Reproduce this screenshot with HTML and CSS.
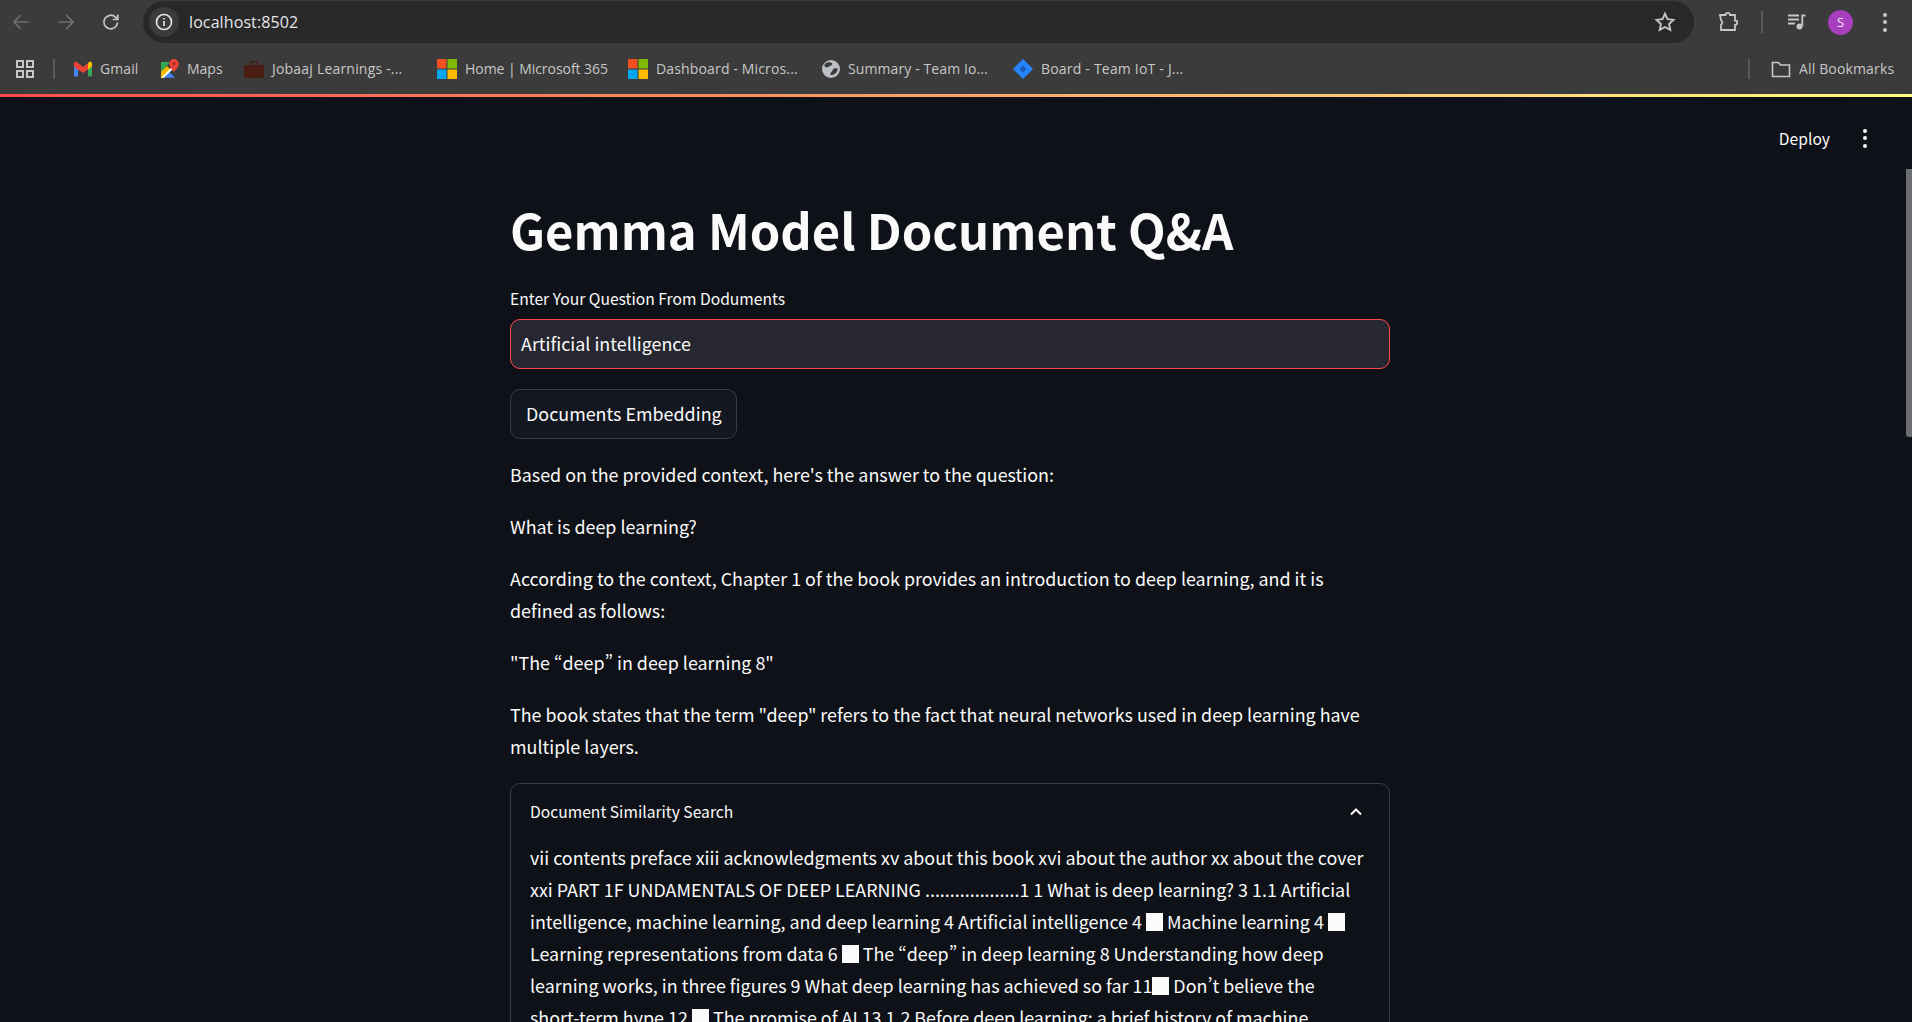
FILE: index.html
```html
<!DOCTYPE html>
<html lang="en">
<head>
    <meta charset="UTF-8">
    <meta name="viewport" content="width=device-width, initial-scale=1.0">
    <title>Gemma Model Document Q&amp;A</title>
    <link rel="stylesheet" href="styles.css">
</head>
<body>
    <header class="browser">
        <div class="toolbar">
            <div class="nav-buttons">
                <svg class="nav-icon dim" viewBox="0 0 20 20"><path d="M17.500 10H3M9.800 3 3 10l6.800 7"/></svg>
                <svg class="nav-icon dim" viewBox="0 0 20 20"><path d="M2.500 10H17M10.200 3 17 10l-6.800 7"/></svg>
                <svg class="nav-icon" viewBox="0 0 20 20"><path d="M16.500 10.500a6.800 6.800 0 1 1-2-5.300l2 2M16.800 2.500v5h-5"/></svg>
            </div>
            <div class="address-bar">
                <span class="site-chip">
                    <svg viewBox="0 0 20 20" class="info-icon"><circle cx="10" cy="10" r="7.500"/><path d="M10 9v5M10 6v1.600"/></svg>
                </span>
                <span class="url">localhost:8502</span>
                <svg class="star" viewBox="0 0 20 20"><path d="m10 2.500 2.300 5 5.400.6-4 3.700 1.100 5.400-4.800-2.700-4.800 2.700 1.100-5.400-4-3.700 5.400-.6z"/></svg>
            </div>
            <div class="toolbar-right">
                <svg class="ext-icon" viewBox="0 0 22 22"><path d="M2 4h5.500a2.200 2.200 0 0 1 4.400 0H17v5.500a2.200 2.200 0 0 1 0 4.400V19H3v-5.200a3 3 0 0 0 0-4.800z"/></svg>
                <span class="tool-sep"></span>
                <svg class="media-icon" viewBox="0 0 20 20"><path d="M1 3.500h11M1 7.500h11M1 11.500h7M18.500 3.500h-3.200V14"/><circle cx="12.500" cy="14.500" r="3"/></svg>
                <span class="avatar">S</span>
                <span class="kebab"><i></i><i></i><i></i></span>
            </div>
        </div>
        <nav class="bookmarks">
            <svg class="apps-icon" viewBox="0 0 18 18"><path d="M1 1h6v6H1zM11 1h6v6h-6zM1 11h6v6H1zM11 11h6v6h-6z"/></svg>
            <span class="mark-sep"></span>
            <a class="mark mark-gmail">
                <svg viewBox="0 0 18 15"><path fill="#4285f4" d="M0 4v9.500c0 .8.600 1.500 1.300 1.500H4V7z"/><path fill="#34a853" d="M14 7v8h2.700c.7 0 1.300-.7 1.300-1.500V4z"/><path fill="#ea4335" d="M4 8.500 0 5V2C0 .5 1.500-.5 2.700.4L9 5.500l3 3.500-3 .5z"/><path fill="#ea4335" d="M9 5.500 14 1.500V8L9 11.500 4 8V1.500z"/><path fill="#fbbc04" d="M14 1.500 15.300.4C16.500-.5 18 .5 18 2v3l-4 3z"/></svg>
                Gmail
            </a>
            <a class="mark mark-maps">
                <svg viewBox="0 0 18 20"><path fill="#34a853" d="M0 3h9.500L0 12.500z"/><path fill="#4285f4" d="M6 10.500 14 18.800H3z"/><path fill="#fbbc04" d="M0 12.500 6 7l4 4-8 8H0z"/><path fill="#fff" d="M0 19 11 8l1.500 1.500L2.500 19z"/><path fill="#ea4335" d="M13 0a4.800 4.800 0 0 0-4.800 4.800C8.200 8 13 13 13 13s4.800-5 4.800-8.200A4.800 4.800 0 0 0 13 0z"/><circle cx="13" cy="4.800" r="1.700" fill="#a52a20"/></svg>
                Maps
            </a>
            <a class="mark mark-jobaaj">
                <svg viewBox="0 0 20 18"><path fill="#4a1e12" d="M1 5h18a1 1 0 0 1 1 1v10a2 2 0 0 1-2 2H2a2 2 0 0 1-2-2V6a1 1 0 0 1 1-1zM6 5V2.500C6 1.500 6.800 1 7.500 1h5c.7 0 1.500.5 1.500 1.500V5h-1.500V2.500h-5V5z"/></svg>
                Jobaaj Learnings -...
            </a>
            <a class="mark mark-home">
                <svg viewBox="0 0 20 20"><path fill="#f25022" d="M0 0h9.500v9.500H0z"/><path fill="#7fba00" d="M10.500 0H20v9.500h-9.500z"/><path fill="#00a4ef" d="M0 10.500h9.500V20H0z"/><path fill="#ffb900" d="M10.500 10.500H20V20h-9.500z"/></svg>
                Home | Microsoft 365
            </a>
            <a class="mark mark-dash">
                <svg viewBox="0 0 20 20"><path fill="#f25022" d="M0 0h9.500v9.500H0z"/><path fill="#7fba00" d="M10.500 0H20v9.500h-9.500z"/><path fill="#00a4ef" d="M0 10.500h9.500V20H0z"/><path fill="#ffb900" d="M10.500 10.500H20V20h-9.500z"/></svg>
                Dashboard - Micros...
            </a>
            <a class="mark mark-summary">
                <svg class="globe" viewBox="0 0 18 18"><circle cx="9" cy="9" r="9" fill="#bcbfc4"/><path fill="#3b3b3b" d="M5 2.500c2-.5 4-.5 5 .5s-.5 2.500-2 3-2 1.500-3.500 1.500S2.500 6 2.500 5 4 3 5 2.500zM15.500 8.500c.5 2-1 4.500-3 5.500-1.500 1-3.500 1.500-4 .5s.5-2 1.500-3 .5-2.500 2-3 3-.5 3.500 0z"/></svg>
                Summary - Team Io...
            </a>
            <a class="mark mark-board">
                <svg viewBox="0 0 20 20"><path fill="#2684ff" d="M10 0 20 10 10 20 0 10z"/><path fill="#1e56b8" d="M10 6.500 13.500 10 10 13.500 6.500 10z"/></svg>
                Board - Team IoT - J...
            </a>
            <span class="mark-sep end"></span>
            <a class="mark mark-all">
                <svg class="folder" viewBox="0 0 20 18"><path d="M1.500 2.500h6l2 2.500h9v11.500h-17z"/></svg>
                All Bookmarks
            </a>
        </nav>
        <div class="load-bar"></div>
    </header>

    <div class="page">
        <div class="app-header">
            <span class="deploy">Deploy</span>
            <span class="kebab white"><i></i><i></i><i></i></span>
        </div>
        <main class="main">
            <h1>Gemma Model Document Q&amp;A</h1>
            <label class="field-label" for="question">Enter Your Question From Doduments</label>
            <input class="question" id="question" type="text" value="Artificial intelligence">
            <button class="embed-btn" type="button">Documents Embedding</button>
            <p>Based on the provided context, here's the answer to the question:</p>
            <p>What is deep learning?</p>
            <p>According to the context, Chapter 1 of the book provides an introduction to deep learning, and it is defined as follows:</p>
            <p>"The “deep” in deep learning 8"</p>
            <p>The book states that the term "deep" refers to the fact that neural networks used in deep learning have multiple layers.</p>
            <section class="expander">
                <div class="expander-head">
                    <span>Document Similarity Search</span>
                    <svg class="chevron" viewBox="0 0 14 10"><path d="M2 7.500 7 2.500l5 5"/></svg>
                </div>
                <div class="expander-body">vii contents preface xiii acknowledgments xv about this book xvi about the author xx about the cover xxi PART 1F UNDAMENTALS OF DEEP LEARNING ...................1 1 What is deep learning? 3 1.1 Artificial intelligence, machine learning, and deep learning 4 Artificial intelligence 4 <span class="tofu"></span> Machine learning 4 <span class="tofu"></span> Learning representations from data 6 <span class="tofu"></span> The “deep” in deep learning 8 Understanding how deep learning works, in three figures 9 What deep learning has achieved so far 11<span class="tofu"></span> Don’t believe the short-term hype 12 <span class="tofu"></span> The promise of AI 13 1.2 Before deep learning: a brief history of machine learning 14</div>
            </section>
        </main>
        <div class="scroll-thumb"></div>
    </div>
</body>
</html>
```

FILE: styles.css
```css
*{
    margin: 0;
    padding: 0;
    box-sizing: border-box;
}
html, body{
    height: 100%;
}
body{
    display: flex;
    flex-direction: column;
    overflow: hidden;
    background-color: #0e1117;
    color: #fafafa;
    font-family: "Noto Sans CJK SC", "Source Sans Pro", sans-serif;
    font-feature-settings: "pwid";
}

/* browser chrome */
.browser{
    flex: none;
    background-color: #3b3b3b;
    font-family: "Open Sans", "Noto Sans", sans-serif;
}
.toolbar{
    display: flex;
    align-items: center;
    height: 43px;
    padding-top: 1px;
}
.nav-buttons{
    display: flex;
    width: 143px;
    padding-left: 11px;
    gap: 25px;
}
.nav-icon{
    width: 20px;
    height: 20px;
    fill: none;
    stroke: #c7c7c7;
    stroke-width: 1.700;
}
.nav-icon.dim{
    stroke: #707070;
}
.address-bar{
    display: flex;
    align-items: center;
    width: 1551px;
    height: 42px;
    padding: 0 18px 0 6px;
    background-color: #282828;
    border-radius: 21px;
}
.site-chip{
    display: flex;
    align-items: center;
    justify-content: center;
    width: 30px;
    height: 30px;
    background-color: #3b3b3b;
    border-radius: 50%;
}
.info-icon{
    width: 20px;
    height: 20px;
    fill: none;
    stroke: #e3e3e3;
    stroke-width: 1.700;
}
.url{
    flex: 1;
    margin-left: 10px;
    font-size: 16px;
    letter-spacing: .1px;
    color: #e6e6e6;
}
.star{
    width: 22px;
    height: 22px;
    fill: none;
    stroke: #c7c7c7;
    stroke-width: 1.700;
}
.toolbar-right{
    flex: 1;
    display: flex;
    align-items: center;
    padding-left: 24px;
}
.ext-icon{
    width: 22px;
    height: 22px;
    fill: none;
    stroke: #c7c7c7;
    stroke-width: 1.800;
}
.tool-sep{
    width: 2px;
    height: 22px;
    margin: 0 24px 0 21px;
    background-color: #5a5a5a;
}
.media-icon{
    width: 20px;
    height: 20px;
    fill: none;
    stroke: #c7c7c7;
    stroke-width: 1.800;
}
.media-icon circle{
    fill: #c7c7c7;
    stroke: none;
}
.avatar{
    width: 25px;
    height: 25px;
    margin-left: 21px;
    border-radius: 50%;
    background-color: #a83fbf;
    color: #f2e6f5;
    font-size: 13px;
    line-height: 25px;
    text-align: center;
}
.kebab{
    display: flex;
    flex-direction: column;
    gap: 3.500px;
    margin-left: 30px;
}
.kebab i{
    width: 4px;
    height: 4px;
    border-radius: 50%;
    background-color: #c7c7c7;
}
.kebab.white{
    margin-left: 33px;
}
.kebab.white i{
    background-color: #fafafa;
}
.bookmarks{
    display: flex;
    align-items: center;
    height: 51px;
    padding-left: 16px;
    font-size: 14px;
    color: #c7c7c7;
}
.apps-icon{
    width: 18px;
    height: 18px;
    fill: none;
    stroke: #c7c7c7;
    stroke-width: 2;
}
.mark-sep{
    width: 2px;
    height: 20px;
    margin: 0 19px;
    background-color: #5a5a5a;
}
.mark-sep.end{
    margin: 0 21px 0 auto;
}
.mark{
    display: flex;
    align-items: center;
    gap: 8px;
    white-space: nowrap;
}
.mark svg{
    flex: none;
    width: 20px;
    height: 20px;
}
.mark-gmail svg, .mark-maps svg, .mark-summary svg{
    width: 18px;
}
.mark-gmail{ width: 87px; letter-spacing: .1px; }
.mark-maps{ width: 83px; }
.mark-jobaaj{ width: 193px; letter-spacing: .2px; }
.mark-home{ width: 191px; letter-spacing: -.05px; }
.mark-dash{ width: 194px; letter-spacing: .15px; }
.mark-summary{ width: 191px; letter-spacing: .1px; }
.mark-board{ letter-spacing: .2px; }
.mark-all{ width: 141px; letter-spacing: .15px; }
.folder{
    fill: none;
    stroke: #c7c7c7;
    stroke-width: 1.600;
}
.load-bar{
    height: 3px;
    background: linear-gradient(to right, #ff4b4b, #fffd80);
}

/* streamlit page */
.page{
    position: relative;
    flex: 1;
    overflow: hidden;
}
.app-header{
    display: flex;
    align-items: center;
    justify-content: flex-end;
    height: 84px;
    padding-right: 45px;
    padding-bottom: 2px;
    font-size: 15.650px;
}
.main{
    width: 880px;
    margin-left: 510px;
    padding-top: 15px;
}
h1{
    font-size: 48.950px;
    font-weight: 700;
    line-height: 66px;
    margin-bottom: 26px;
}
.field-label{
    display: block;
    font-size: 15.650px;
    line-height: 22px;
    margin-bottom: 9px;
}
.question{
    display: block;
    width: 100%;
    height: 50px;
    padding: 0 10px 2px;
    background-color: #262730;
    border: 1px solid #ff4b4b;
    border-radius: 10px;
    outline: none;
    color: #fafafa;
    font-family: inherit;
    font-size: 17.900px;
    font-feature-settings: "pwid";
}
.embed-btn{
    display: block;
    height: 50px;
    margin: 20px 0 19px;
    padding: 0 14px 2px 15px;
    background-color: #13171f;
    border: 1px solid #3a3d46;
    border-radius: 10px;
    color: #fafafa;
    font-family: inherit;
    font-size: 17.900px;
}
p{
    font-size: 17.900px;
    line-height: 32px;
    margin-bottom: 20px;
}
.expander{
    border: 1px solid #3a3d46;
    border-radius: 10px;
    margin-top: 21px;
}
.expander-head{
    display: flex;
    align-items: center;
    justify-content: space-between;
    height: 57px;
    padding: 0 26px 2px 19px;
    font-size: 15.650px;
}
.chevron{
    width: 14px;
    height: 10px;
    fill: none;
    stroke: #fafafa;
    stroke-width: 2;
}
.expander-body{
    padding: 0 21px 0 19px;
    font-size: 17.900px;
    line-height: 32px;
}
.tofu{
    display: inline-block;
    width: 17px;
    height: 18px;
    vertical-align: -2px;
    background-color: #fafafa;
}
.scroll-thumb{
    position: absolute;
    top: 72px;
    right: 0;
    width: 6px;
    height: 268px;
    background-color: #6b6d72;
    border-radius: 0 0 0 3px;
}
```
